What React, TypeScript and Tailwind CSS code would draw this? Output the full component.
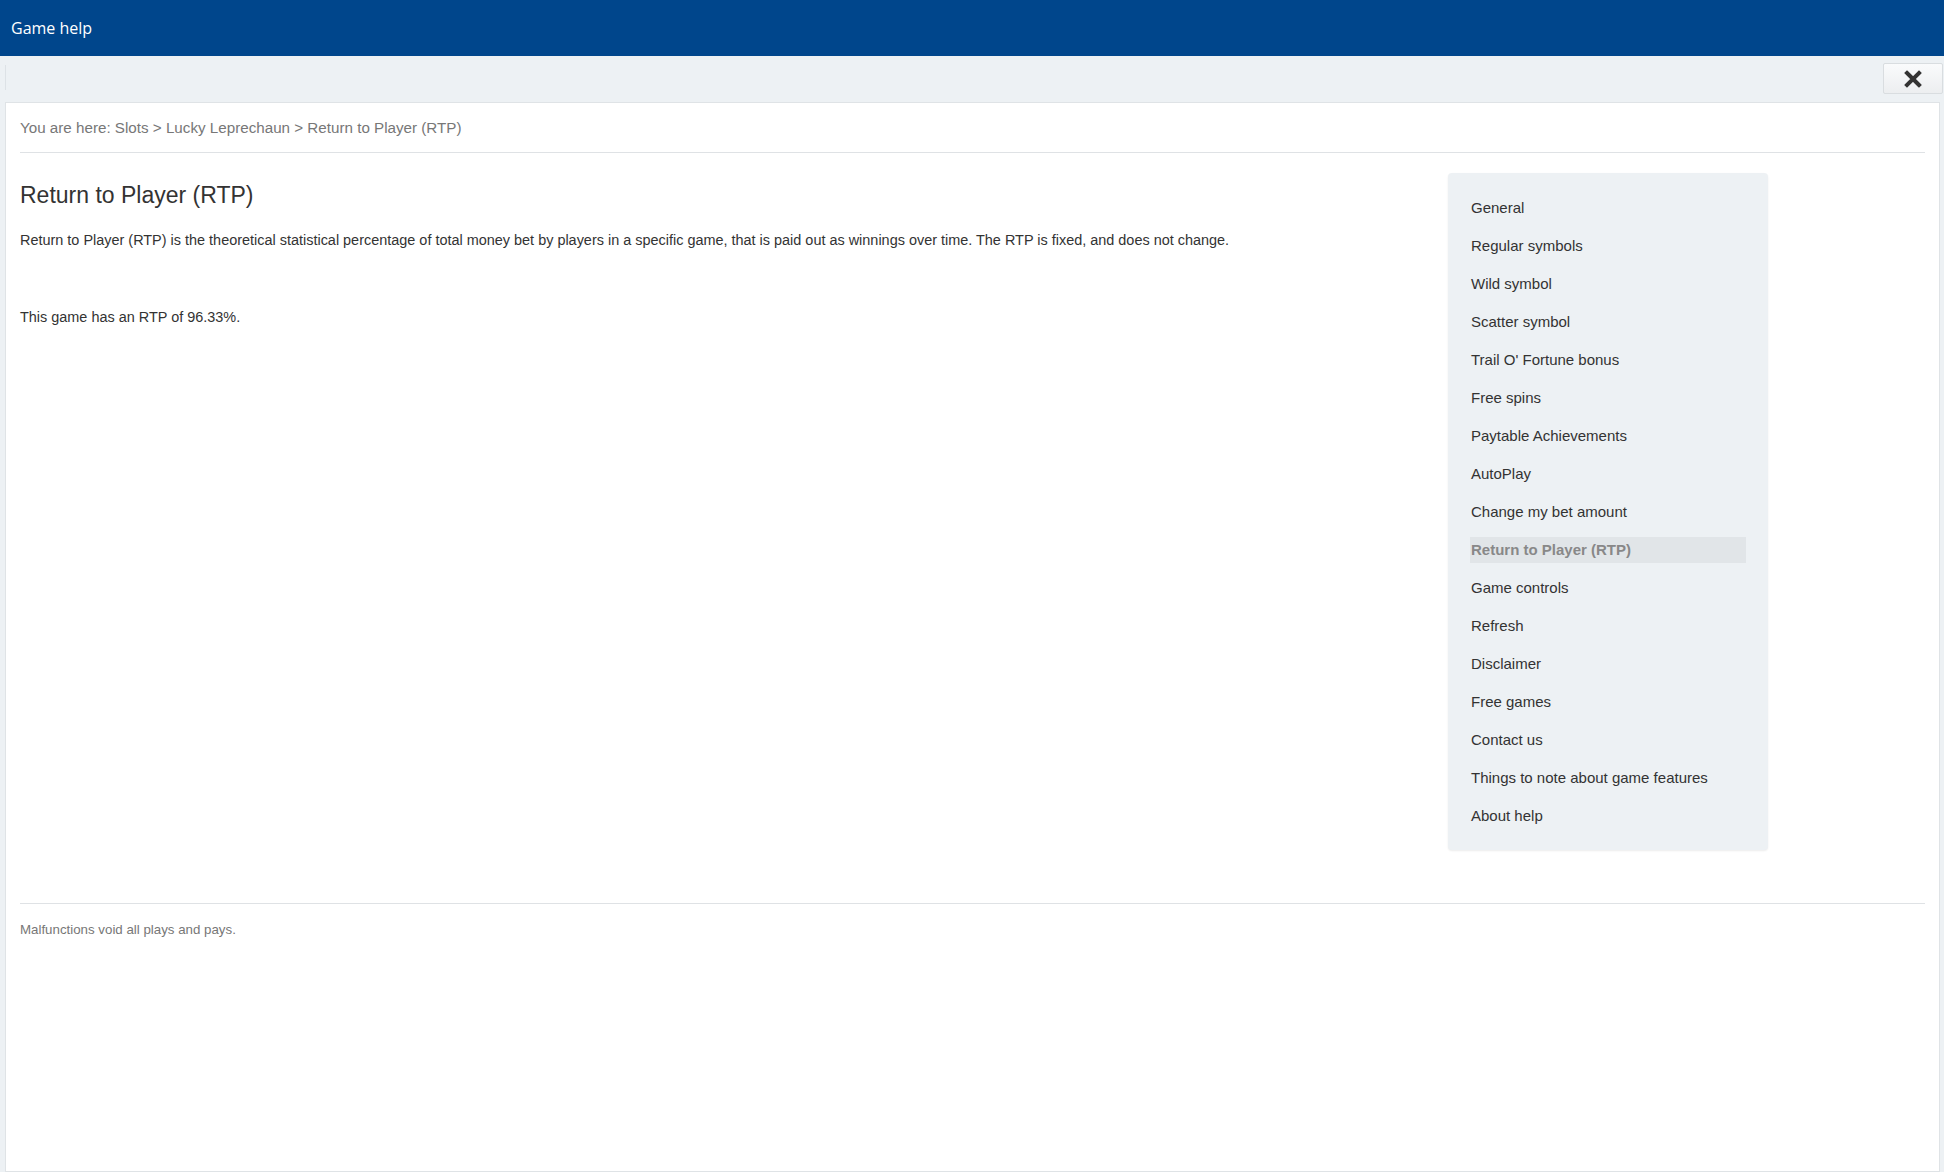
const topics = [
  'General',
  'Regular symbols',
  'Wild symbol',
  'Scatter symbol',
  "Trail O' Fortune bonus",
  'Free spins',
  'Paytable Achievements',
  'AutoPlay',
  'Change my bet amount',
  'Return to Player (RTP)',
  'Game controls',
  'Refresh',
  'Disclaimer',
  'Free games',
  'Contact us',
  'Things to note about game features',
  'About help',
];

const ACTIVE = 'Return to Player (RTP)';

function CloseIcon() {
  return (
    <svg width="18" height="18" viewBox="0 0 18 18" aria-hidden="true">
      <path d="M3 3 L15 15 M15 3 L3 15" stroke="#333" strokeWidth="4" strokeLinecap="square" />
    </svg>
  );
}

function Sidebar() {
  return (
    <nav className="w-[320px] shrink-0 self-start rounded-[4px] bg-[#edf1f4] px-[22px] pt-[16px] pb-[15px] shadow-[0_1px_2px_rgba(0,0,0,0.08)]">
      <ul>
        {topics.map((t) => (
          <li key={t} className="py-[6px]">
            {t === ACTIVE ? (
              <span className="flex h-[26px] items-center bg-[#e1e5e8] pl-[1px] font-bold text-[#888]">{t}</span>
            ) : (
              <a className="flex h-[26px] cursor-pointer items-center pl-[1px] text-[#333]">{t}</a>
            )}
          </li>
        ))}
      </ul>
    </nav>
  );
}

export default function App() {
  return (
    <div className="flex h-[1172px] w-full flex-col overflow-hidden bg-[#edf1f4] font-['Liberation_Sans',Arial,sans-serif]">
      <header className="flex h-[56px] shrink-0 items-center bg-[#00468c] pl-[11px]">
        <h1 className="font-['Open_Sans',sans-serif] text-[16px] text-white">Game help</h1>
      </header>

      <div className="flex h-[46px] shrink-0 items-start justify-between pl-[5px] pr-[1px] pt-[7px]">
        <div className="mt-[2px] h-[25px] w-[1px] bg-[#dde2e6]" />
        <button className="flex h-[31px] w-[60px] items-center justify-center rounded-[2px] border border-[#d9dde0] bg-gradient-to-b from-[#fafbfc] to-[#eceef0]">
          <CloseIcon />
        </button>
      </div>

      <main className="ml-[5px] mr-[4px] flex flex-1 flex-col border border-[#dfe3e6] bg-white px-[14px]">
        <div className="border-b border-[#dfe2e5] pt-[16px] pb-[15px] text-[15.2px] leading-[18px] text-[#777]">
          You are here: Slots &gt; Lucky Leprechaun &gt; Return to Player (RTP)
        </div>

        <div className="flex gap-[20px] pt-[20px]">
          <section className="flex-1 pt-[8px] text-[#333]">
            <h2 className="text-[23px] leading-[28px]">Return to Player (RTP)</h2>
            <p className="mt-[22px] text-[14.45px] leading-[18px]">
              Return to Player (RTP) is the theoretical statistical percentage of total money bet by players in a specific game, that is paid out as winnings over time. The RTP is fixed, and does not change.
            </p>
            <p className="mt-[59px] text-[14.45px] leading-[18px]">This game has an RTP of 96.33%.</p>
          </section>
          <div className="mr-[157px] text-[15px]">
            <Sidebar />
          </div>
        </div>

        <footer className="mt-[53px] border-t border-[#dfe2e5] pt-[17px] text-[13.3px] leading-[18px] text-[#777]">
          Malfunctions void all plays and pays.
        </footer>
      </main>
    </div>
  );
}
